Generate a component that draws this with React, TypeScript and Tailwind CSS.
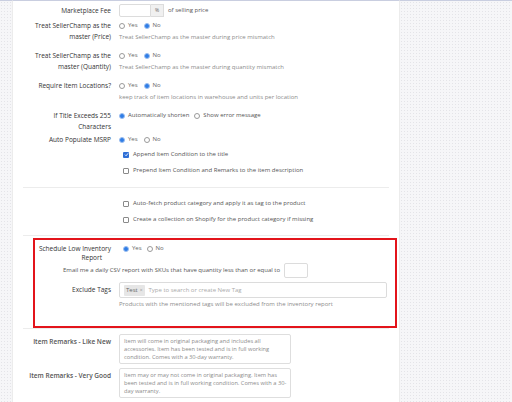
import React from 'react';

function Radio({ checked }: { checked?: boolean }) {
  return checked ? (
    <span className="inline-block h-[6px] w-[6px] shrink-0 rounded-full border border-[#9dbff0] bg-[#2f7de6]" />
  ) : (
    <span className="inline-block h-[6px] w-[6px] shrink-0 rounded-full border border-[#9a9a9a] bg-white" />
  );
}

function Check({ checked }: { checked?: boolean }) {
  return checked ? (
    <span className="inline-flex h-[6px] w-[6px] shrink-0 items-center justify-center rounded-[1px] bg-[#2f6fd6]">
      <svg viewBox="0 0 8 8" className="h-[5px] w-[5px]">
        <path d="M1.5 4.2 L3.3 6 L6.6 2" fill="none" stroke="#fff" strokeWidth="1.4" />
      </svg>
    </span>
  ) : (
    <span className="inline-block h-[6px] w-[6px] shrink-0 rounded-[1px] border border-[#8a8a8a] bg-white" />
  );
}

function YesNo({ yes }: { yes: boolean }) {
  return (
    <div className="flex h-[11px] items-center text-[#666]">
      <Radio checked={yes} />
      <span className="ml-[3px]">Yes</span>
      <span className="ml-[6px]" />
      <Radio checked={!yes} />
      <span className="ml-[3px]">No</span>
    </div>
  );
}

function Label({ children }: { children: React.ReactNode }) {
  return <div className="w-[98px] shrink-0 text-right text-[6.5px] text-[#333]">{children}</div>;
}

function Remark({ label, text }: { label: string; text: string }) {
  return (
    <div className="flex h-[30px]">
      <div className="w-[98px] shrink-0 pt-[2px] text-right text-[6.5px] font-semibold text-[#555]">{label}</div>
      <div className="ml-[8px] h-[30px] w-[172px] rounded-[2px] border border-[#dedede] pl-[4px] pr-[1px] pt-[2px] text-[5.7px] leading-[8px] text-[#8c8c8c]">
        {text}
      </div>
    </div>
  );
}

export default function App() {
  return (
    <div
      className="flex h-[402px] w-[512px] overflow-hidden bg-[#f6f6f8] text-[6px] leading-[11px]"
      style={{ fontFamily: '"Open Sans", "Noto Sans", sans-serif' }}
    >
      <div className="w-[12px] shrink-0 border-t border-[#c9cee0] bg-[radial-gradient(#e4e4e8_0.6px,transparent_0.7px)] bg-[length:3px_3px]" />
      <div className="w-[387px] shrink-0 border-t border-l border-[#c9cee0] border-l-[#ececec] bg-white pt-[3px]">
        {/* Marketplace fee */}
        <div className="flex h-[13px] items-center">
          <Label>Marketplace Fee</Label>
          <div className="ml-[8px] flex h-[13px] items-stretch">
            <div className="w-[32px] rounded-l-[2px] border border-[#dcdcdc] bg-white" />
            <div className="flex w-[13px] items-center justify-center border border-l-0 border-[#dcdcdc] bg-[#f0f0f0] text-[5px] text-[#666]">%</div>
          </div>
          <span className="ml-[4px] text-[#555]">of selling price</span>
        </div>

        <div className="mt-[3px] flex">
          <Label>Treat SellerChamp as the<br />master (Price)</Label>
          <div className="ml-[8px]">
            <YesNo yes={false} />
            <div className="mt-[1px] text-[#8c8c8c]">Treat SellerChamp as the master during price mismatch</div>
          </div>
        </div>

        <div className="mt-[7px] flex">
          <Label>Treat SellerChamp as the<br />master (Quantity)</Label>
          <div className="ml-[8px]">
            <YesNo yes={false} />
            <div className="mt-[1px] text-[#8c8c8c]">Treat SellerChamp as the master during quantity mismatch</div>
          </div>
        </div>

        <div className="mt-[7px] flex">
          <Label>Require Item Locations?</Label>
          <div className="ml-[8px]">
            <YesNo yes={false} />
            <div className="mt-[1px] text-[#8c8c8c]">keep track of item locations in warehouse and units per location</div>
          </div>
        </div>

        <div className="mt-[7px] flex">
          <Label>If Title Exceeds 255<br />Characters</Label>
          <div className="ml-[8px] flex h-[11px] items-center text-[#555]">
            <Radio checked />
            <span className="ml-[3px]">Automatically shorten</span>
            <span className="ml-[5px]" />
            <Radio />
            <span className="ml-[3px]">Show error message</span>
          </div>
        </div>

        <div className="mt-[2px] flex">
          <Label>Auto Populate MSRP</Label>
          <div className="ml-[8px]">
            <YesNo yes />
          </div>
        </div>

        <div className="ml-[110px] mt-[4px] flex flex-col gap-[5px] text-[#555]">
          <div className="flex h-[11px] items-center gap-[4px]"><Check checked />Append Item Condition to the title</div>
          <div className="flex h-[11px] items-center gap-[4px]"><Check />Prepend Item Condition and Remarks to the item description</div>
        </div>

        <div className="mx-[10px] mt-[11px] border-t border-[#ececec]" />

        <div className="ml-[110px] mt-[10px] flex flex-col gap-[5px] text-[#555]">
          <div className="flex h-[11px] items-center gap-[4px]"><Check />Auto-fetch product category and apply it as tag to the product</div>
          <div className="flex h-[11px] items-center gap-[4px]"><Check />Create a collection on Shopify for the product category if missing</div>
        </div>

        <div className="mx-[10px] mt-[10px] border-t border-[#ececec]" />

        {/* Highlighted section */}
        <div className="ml-[20px] mr-[2px] mt-[2px] h-[90px] border-2 border-[#e3141b] pt-[4px]">
          <div className="flex">
            <div className="w-[76px] shrink-0 text-right text-[6.5px] leading-[9px] text-[#333]">Schedule Low Inventory<br /><span className="pr-[9px]">Report</span></div>
            <div className="ml-[12px] flex h-[9px] items-center text-[#666]">
              <Radio checked />
              <span className="ml-[3px]">Yes</span>
              <span className="ml-[5px]" />
              <Radio />
              <span className="ml-[3px]">No</span>
            </div>
          </div>
          <div className="ml-[28px] mt-[1px] flex h-[15px] items-center text-[#555]">
            <span>Email me a daily CSV report with SKUs that have quantity less than or equal to</span>
            <div className="ml-[4px] h-[15px] w-[24px] rounded-[2px] border border-[#dcdcdc]" />
          </div>
          <div className="mt-[4px] flex">
            <div className="w-[76px] shrink-0 pt-[2px] text-right text-[6.5px] text-[#333]">Exclude Tags</div>
            <div className="ml-[8px]">
              <div className="flex h-[16px] w-[268px] items-center rounded-[2px] border border-[#dcdcdc] px-[4px]">
                <span className="flex h-[11px] items-center rounded-[1px] bg-[#e6e6e6] px-[2px] text-[#666]">
                  Test <span className="ml-[2px] text-[5px] text-[#999]">×</span>
                </span>
                <span className="ml-[4px] text-[#aaa]">Type to search or create New Tag</span>
              </div>
              <div className="mt-[1px] text-[#8c8c8c]">Products with the mentioned tags will be excluded from the inventory report</div>
            </div>
          </div>
        </div>

        <div className="mx-[10px] border-t border-[#ececec]" />

        <div className="mt-[5px] flex flex-col gap-[4px]">
          <Remark
            label="Item Remarks - Like New"
            text="Item will come in original packaging and includes all accessories.  Item has been tested and is in full working condition.  Comes with a 30-day warranty."
          />
          <Remark
            label="Item Remarks - Very Good"
            text="Item may or may not come in original packaging.  Item has been tested and is in full working condition. Comes with a 30-day warranty."
          />
          <Remark label="" text="" />
        </div>
      </div>
      <div className="flex-1 border-t border-l border-[#c9cee0] border-l-[#ececec] bg-[radial-gradient(#e4e4e8_0.6px,transparent_0.7px)] bg-[length:3px_3px]" />
    </div>
  );
}
